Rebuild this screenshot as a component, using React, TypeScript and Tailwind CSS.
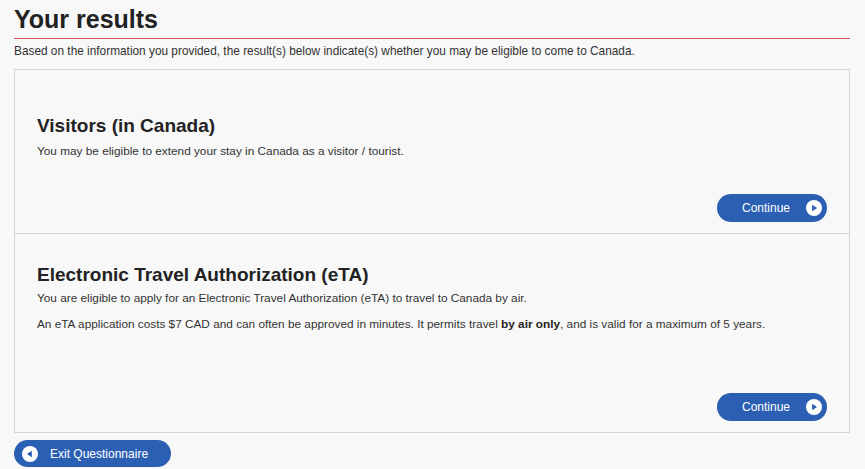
import React from "react";

function PlayCircle({ dir = "right" }: { dir?: "right" | "left" }) {
  return (
    <svg width="16" height="16" viewBox="0 0 16 16" className="shrink-0">
      <circle cx="8" cy="8" r="8" fill="#ffffff" />
      {dir === "right" ? (
        <path d="M6.2 4.8 L11 8 L6.2 11.2 Z" fill="#2a5db0" />
      ) : (
        <path d="M9.8 4.8 L5 8 L9.8 11.2 Z" fill="#2a5db0" />
      )}
    </svg>
  );
}

function ContinueButton() {
  return (
    <div className="flex justify-end">
      <button className="flex h-[28px] w-[110px] items-center justify-between rounded-full bg-[#2b5fb3] pl-[25px] pr-[5px] text-[12px] text-white">
        <span>Continue</span>
        <PlayCircle />
      </button>
    </div>
  );
}

export default function App() {
  return (
    <div
      className="min-h-[469px] bg-[#f8f8f8] px-[14px] text-[#333333]"
      style={{ fontFamily: '"Liberation Sans", Arial, sans-serif' }}
    >
      <h1 className="pt-[4px] text-[25px] font-bold leading-[30px] text-[#222222]">Your results</h1>
      <div className="mr-[1px] mt-[4px] h-px bg-[#d4545b]" />
      <p className="mt-[3px] text-[11.85px] leading-[18px] text-[#333333]">
        Based on the information you provided, the result(s) below indicate(s) whether you may be eligible to come to Canada.
      </p>
      <div className="mr-[1px] mt-[9px]">
        <div className="border border-[#d5d5d5] px-[22px] pb-[11px] pt-[44px]">
          <h2 className="text-[19px] font-bold leading-[24px] text-[#222222]">Visitors (in Canada)</h2>
          <p className="mt-[4px] text-[11.8px] leading-[18px]">
            You may be eligible to extend your stay in Canada as a visitor / tourist.
          </p>
          <div className="mt-[34px]">
            <ContinueButton />
          </div>
        </div>
        <div className="border border-t-0 border-[#d5d5d5] px-[22px] pb-[11px] pt-[29px]">
          <h2 className="text-[19px] font-bold leading-[24px] text-[#222222]">Electronic Travel Authorization (eTA)</h2>
          <p className="mt-[2px] text-[11.8px] leading-[18px]">
            You are eligible to apply for an Electronic Travel Authorization (eTA) to travel to Canada by air.
          </p>
          <p className="mt-[8px] text-[11.8px] leading-[18px]">
            An eTA application costs $7 CAD and can often be approved in minutes. It permits travel{" "}
            <strong className="font-bold text-[#222222]">by air only</strong>, and is valid for a maximum of 5 years.
          </p>
          <div className="mt-[60px]">
            <ContinueButton />
          </div>
        </div>
      </div>
      <div className="mt-[7px]">
        <button className="flex h-[27px] w-[157px] items-center rounded-full bg-[#2b5fb3] pl-[8px] text-[12px] text-white">
          <PlayCircle dir="left" />
          <span className="ml-[12px]">Exit Questionnaire</span>
        </button>
      </div>
    </div>
  );
}
